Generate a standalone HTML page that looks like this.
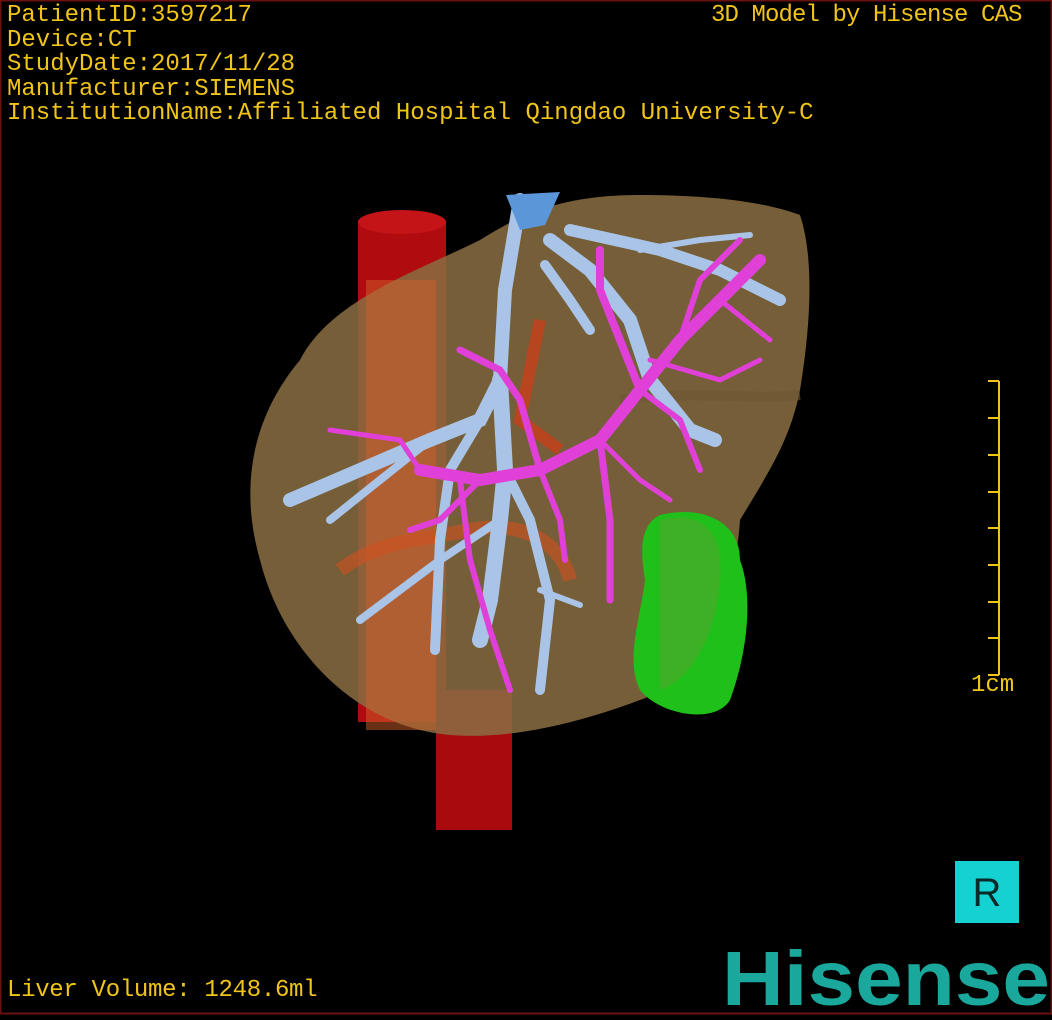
<!DOCTYPE html>
<html><head><style>
html,body{margin:0;padding:0;background:#000;}
body{width:1052px;height:1020px;position:relative;overflow:hidden;font-family:"Liberation Mono","DejaVu Sans Mono",monospace;}
.t{position:absolute;color:#f0c419;font-size:24px;line-height:24.5px;white-space:pre;}
</style></head><body>
<svg width="1052" height="1020" style="position:absolute;left:0;top:0">
<rect x="0.5" y="0.5" width="1051" height="1013" fill="none" stroke="#6a1010" stroke-width="2"/>
<rect x="358" y="222" width="88" height="500" fill="#b00c10"/>
<ellipse cx="402" cy="222" rx="44" ry="12" fill="#c51418"/>
<rect x="436" y="690" width="76" height="140" fill="#a80a0e"/>
<path d="M300 360 C330 300 420 270 480 240 C520 215 560 195 640 195 C700 195 760 200 800 215 C815 260 810 330 800 390 C790 440 770 470 740 520 C735 600 700 680 640 700 C560 730 480 745 420 730 C340 710 280 640 260 560 C240 490 250 420 300 360 Z" fill="#8a6e42" fill-opacity="0.85"/>
<path d="M620 400 C680 390 760 400 800 395" stroke="#6e5634" stroke-width="10" fill="none" opacity="0.6"/>
<rect x="366" y="280" width="70" height="450" fill="#d0602a" opacity="0.5"/>
<path d="M540 320 L520 420 L560 450" stroke="#c8401a" stroke-width="12" fill="none" opacity="0.8"/>
<path d="M340 570 C380 540 420 540 470 530 C520 520 560 540 570 580" stroke="#d05020" stroke-width="14" fill="none" opacity="0.6"/>
<path d="M660 515 C700 505 740 520 740 560 C755 600 745 660 730 700 C715 725 660 715 640 690 C625 660 640 620 645 580 C640 550 640 525 660 515 Z" fill="#1fc01a"/>
<path d="M660 520 C700 510 725 530 720 580 C715 640 690 680 660 690" fill="#5ca030" opacity="0.5"/>
<g stroke="#a9c4e6" fill="none" stroke-linecap="round">
<path d="M520 200 L505 290 L500 380 L480 420 L430 440 L360 470 L290 500" stroke-width="14"/>
<path d="M500 380 L505 470 L500 520 L490 600 L480 640" stroke-width="16"/>
<path d="M505 470 L530 520 L550 600 L540 690" stroke-width="10"/>
<path d="M500 520 L440 560 L360 620" stroke-width="8"/>
<path d="M480 420 L450 470 L440 540 L435 650" stroke-width="10"/>
<path d="M430 440 L330 520" stroke-width="8"/>
<path d="M550 240 L590 270 L630 320 L650 380 L690 430 L715 440" stroke-width="14"/>
<path d="M570 230 L660 250 L720 270 L780 300" stroke-width="12"/>
<path d="M545 265 L570 300 L590 330" stroke-width="10"/>
<path d="M640 250 L700 240 L750 235" stroke-width="6"/>
<path d="M540 590 L580 605" stroke-width="6"/>
</g>
<path d="M506 195 L560 192 L545 225 L520 230 Z" fill="#5a96d8"/>
<g stroke="#e040d8" fill="none" stroke-linecap="round">
<path d="M420 470 L480 480 L540 470 L600 440 L640 390 L680 340 L720 300 L760 260" stroke-width="12"/>
<path d="M600 440 L610 520 L610 600" stroke-width="7"/>
<path d="M640 390 L620 340 L600 290 L600 250" stroke-width="8"/>
<path d="M680 340 L700 280 L740 240" stroke-width="6"/>
<path d="M720 300 L770 340" stroke-width="5"/>
<path d="M540 470 L520 400 L500 370 L460 350" stroke-width="7"/>
<path d="M480 480 L440 520 L410 530" stroke-width="6"/>
<path d="M540 470 L560 520 L565 560" stroke-width="6"/>
<path d="M460 480 L470 560 L490 630 L510 690" stroke-width="6"/>
<path d="M330 430 L400 440 L420 470" stroke-width="5"/>
<path d="M640 390 L680 420 L700 470" stroke-width="6"/>
<path d="M600 440 L640 480 L670 500" stroke-width="5"/>
<path d="M650 360 L720 380 L760 360" stroke-width="5"/>
</g>
<g stroke="#f0c419" stroke-width="2">
<line x1="999" y1="381" x2="999" y2="675"/>
<line x1="988" y1="381" x2="999" y2="381"/>
<line x1="988" y1="418" x2="999" y2="418"/>
<line x1="988" y1="455" x2="999" y2="455"/>
<line x1="988" y1="492" x2="999" y2="492"/>
<line x1="988" y1="528" x2="999" y2="528"/>
<line x1="988" y1="565" x2="999" y2="565"/>
<line x1="988" y1="602" x2="999" y2="602"/>
<line x1="988" y1="638" x2="999" y2="638"/>
<line x1="988" y1="675" x2="999" y2="675"/>
</g>
<rect x="955" y="861" width="64" height="62" fill="#14d2d2"/>
<text x="987" y="906" font-family="Liberation Sans,sans-serif" font-size="40" fill="#0a2a2a" text-anchor="middle">R</text>
<text x="722" y="1005" font-family="Liberation Sans,sans-serif" font-size="77" font-weight="bold" fill="#1aa89c" textLength="328" lengthAdjust="spacingAndGlyphs">Hisense</text>
</svg>
<div class="t" style="left:7px;top:4px">PatientID:3597217
Device:CT
StudyDate:2017/11/28
Manufacturer:SIEMENS
InstitutionName:Affiliated Hospital Qingdao University-C</div>
<div class="t" style="left:711px;top:4px;letter-spacing:-0.9px">3D Model by Hisense CAS</div>
<div class="t" style="left:971px;top:674px">1cm</div>
<div class="t" style="left:7px;top:979px;letter-spacing:-0.3px">Liver Volume: 1248.6ml</div>
</body></html>
